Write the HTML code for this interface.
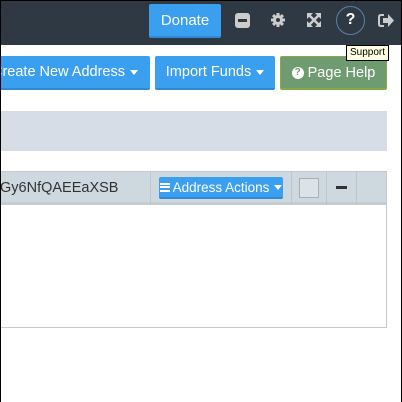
<!DOCTYPE html><html><head><style>
*{margin:0;padding:0;box-sizing:border-box}
body{width:402px;height:402px;overflow:hidden;background:#fff;font-family:"Liberation Sans",sans-serif;position:relative}
.a{position:absolute}
.btn{position:absolute;background:#3b9ff0;color:#fff;font-size:14px;border-bottom:2px solid #3089d6;border-radius:2px;display:flex;align-items:center;justify-content:center}
.car{display:inline-block;width:0;height:0;border-left:4px solid transparent;border-right:4px solid transparent;border-top:5px solid #fff;margin-left:5px}
</style></head><body>
<div class="a" style="left:0;top:0;width:402px;height:45px;background:#2f3943"></div>
<div class="btn" style="left:149px;top:4px;width:72px;height:34px;font-size:15px">Donate</div>
<div class="a" style="left:235px;top:13px;width:15px;height:15px;background:#ccc;border-radius:3px"><div class="a" style="left:3px;top:6px;width:9px;height:3px;background:#2f3943"></div></div>
<svg class="a" style="left:270px;top:12px" width="16" height="16" viewBox="0 0 16 16"><g fill="#ccc"><circle cx="8" cy="8" r="5"/><rect x="6.5" y="1" width="3" height="14"/><rect x="1" y="6.5" width="14" height="3"/><rect x="6.5" y="1" width="3" height="14" transform="rotate(45 8 8)"/><rect x="6.5" y="1" width="3" height="14" transform="rotate(-45 8 8)"/></g><circle cx="8" cy="8" r="2" fill="#2f3943"/></svg>
<svg class="a" style="left:306px;top:12px" width="16" height="16" viewBox="0 0 16 16"><g stroke="#ccc" stroke-width="2.5"><path d="M3 3L13 13M13 3L3 13"/></g><g fill="#ccc"><path d="M1 1h6L1 7zM15 1v6L9 1zM1 15V9l6 6zM15 15H9l6-6z"/></g></svg>
<div class="a" style="left:336px;top:6px;width:29px;height:29px;border:1.5px solid #5c7fa8;border-radius:50%;color:#fff;font-weight:bold;font-size:16px;text-align:center;line-height:26px">?</div>
<svg class="a" style="left:378px;top:13px" width="16" height="15" viewBox="0 0 16 15"><path d="M6 2H3Q1 2 1 4V11Q1 13 3 13H6" stroke="#ccc" stroke-width="2" fill="none"/><path d="M5 5h5V1l6 6.5-6 6.5V10H5z" fill="#ccc"/></svg>
<div class="btn" style="left:-20px;top:56px;width:170px;height:34px;font-size:14.5px">Create New Address<span class="car"></span></div>
<div class="btn" style="left:155px;top:56px;width:120px;height:34px;font-size:14.5px">Import Funds<span class="car"></span></div>
<div class="btn" style="left:280px;top:56px;width:107px;height:34px;font-size:14.5px;background:#6e9b6f;border:1px solid #8aa845;border-bottom:2px solid #86a845"><span style="display:inline-block;width:12px;height:12px;border-radius:50%;background:#fff;color:#6e9b6f;font-size:10px;font-weight:bold;line-height:12px;text-align:center;margin-right:4px">?</span>Page Help</div>
<div class="a" style="left:346px;top:45px;width:43px;height:16px;background:#ffffe1;border:1px solid #000;font-size:10px;line-height:14px;text-align:center;color:#000">Support</div>
<div class="a" style="left:0;top:111px;width:387px;height:40px;background:#d6dde6"></div>
<div class="a" style="left:0;top:171px;width:387px;height:157px;border:1px solid #c6c9cb;border-left:none"></div>
<div class="a" style="left:0;top:172px;width:386px;height:33px;background:#cdd9df;border-bottom:3px solid #c2ccd1"></div>
<div class="a" style="left:150px;top:172px;width:1px;height:33px;background:#bcc6cb"></div>
<div class="a" style="left:291px;top:172px;width:1px;height:33px;background:#bcc6cb"></div>
<div class="a" style="left:326px;top:172px;width:1px;height:33px;background:#bcc6cb"></div>
<div class="a" style="left:356px;top:172px;width:1px;height:33px;background:#bcc6cb"></div>
<div class="a" style="left:0;top:179px;font-size:14.5px;color:#333;line-height:18px">Gy6NfQAEEaXSB</div>
<div class="btn" style="left:159px;top:177px;width:124px;height:22px;font-size:13.5px"><span style="display:inline-block;width:10px;height:9px;border-top:2px solid #fff;border-bottom:2px solid #fff;position:relative;margin-right:3px"><span style="position:absolute;left:0;top:1.5px;width:10px;height:2px;background:#fff"></span></span>Address Actions<span class="car"></span></div>
<div class="a" style="left:299px;top:178px;width:20px;height:20px;background:#dce3e6;border:1px solid #a9b0b3"></div>
<div class="a" style="left:336px;top:186px;width:11px;height:3px;background:#333"></div>
<div class="a" style="left:0;top:0;width:402px;height:402px;border:1px solid #000;border-bottom:none"></div>
</body></html>
